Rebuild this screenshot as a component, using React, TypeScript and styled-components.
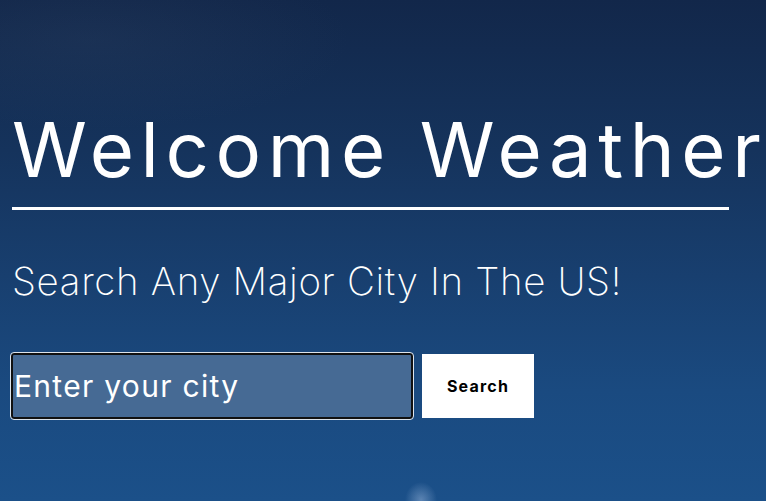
import React from "react";
import styled, { createGlobalStyle } from "styled-components";

const Global = createGlobalStyle`
  html, body { margin: 0; padding: 0; height: 100%; }
  body { font-family: Inter, "Open Sans", sans-serif; overflow: hidden; }
`;

const Page = styled.main`
  width: 766px;
  height: 501px;
  box-sizing: border-box;
  padding: 96px 0 0 12px;
  overflow: hidden;
  color: #fff;
  background:
    radial-gradient(ellipse 16px 18px at 421px 500px, rgba(170, 195, 230, 0.45), rgba(170, 195, 230, 0) 100%),
    radial-gradient(ellipse 260px 90px at 90px 40px, rgba(60, 80, 110, 0.18), rgba(60, 80, 110, 0) 100%),
    linear-gradient(180deg, #12274a 0%, #15335c 30%, #183f6f 55%, #1a4a80 78%, #1b5089 100%);
  display: flex;
  flex-direction: column;
  align-items: flex-start;
`;

const Title = styled.h1`
  margin: 0;
  font-family: Inter, sans-serif;
  font-weight: 400;
  font-size: 76px;
  line-height: 1.4;
  letter-spacing: 6.6px;
  white-space: nowrap;
`;

const Rule = styled.hr`
  margin: 5px 0 0 0;
  width: 717px;
  height: 3px;
  border: 0;
  background: #fff;
`;

const Subtitle = styled.h2`
  margin: 45px 0 0;
  font-family: Inter, sans-serif;
  font-weight: 200;
  font-size: 38.5px;
  line-height: 1.4;
  letter-spacing: 0.65px;
  white-space: nowrap;
`;

const Form = styled.form`
  margin-top: 44px;
  display: flex;
  align-items: center;
  gap: 9px;
`;

const Field = styled.input`
  box-sizing: border-box;
  width: 402px;
  height: 66px;
  margin: 0 0 0 -1px;
  padding: 0 1px;
  border: 2px solid #111;
  border-radius: 3px;
  outline: 1px solid rgba(255, 255, 255, 0.85);
  background: #466a94;
  color: #fff;
  font-family: Inter, sans-serif;
  font-size: 30px;
  font-weight: 400;
  letter-spacing: 1.3px;
  &::placeholder { color: #fff; opacity: 1; }
`;

const Button = styled.button`
  width: 112px;
  height: 64px;
  border: 0;
  background: #fff;
  color: #000;
  font-family: Inter, sans-serif;
  font-weight: 700;
  font-size: 16px;
  letter-spacing: 1.2px;
  cursor: pointer;
`;

export default function App() {
  return (
    <>
      <Global />
      <Page>
        <Title>Welcome Weather</Title>
        <Rule />
        <Subtitle>Search Any Major City In The US!</Subtitle>
        <Form onSubmit={(e) => e.preventDefault()}>
          <Field placeholder="Enter your city" />
          <Button type="submit">Search</Button>
        </Form>
      </Page>
    </>
  );
}
